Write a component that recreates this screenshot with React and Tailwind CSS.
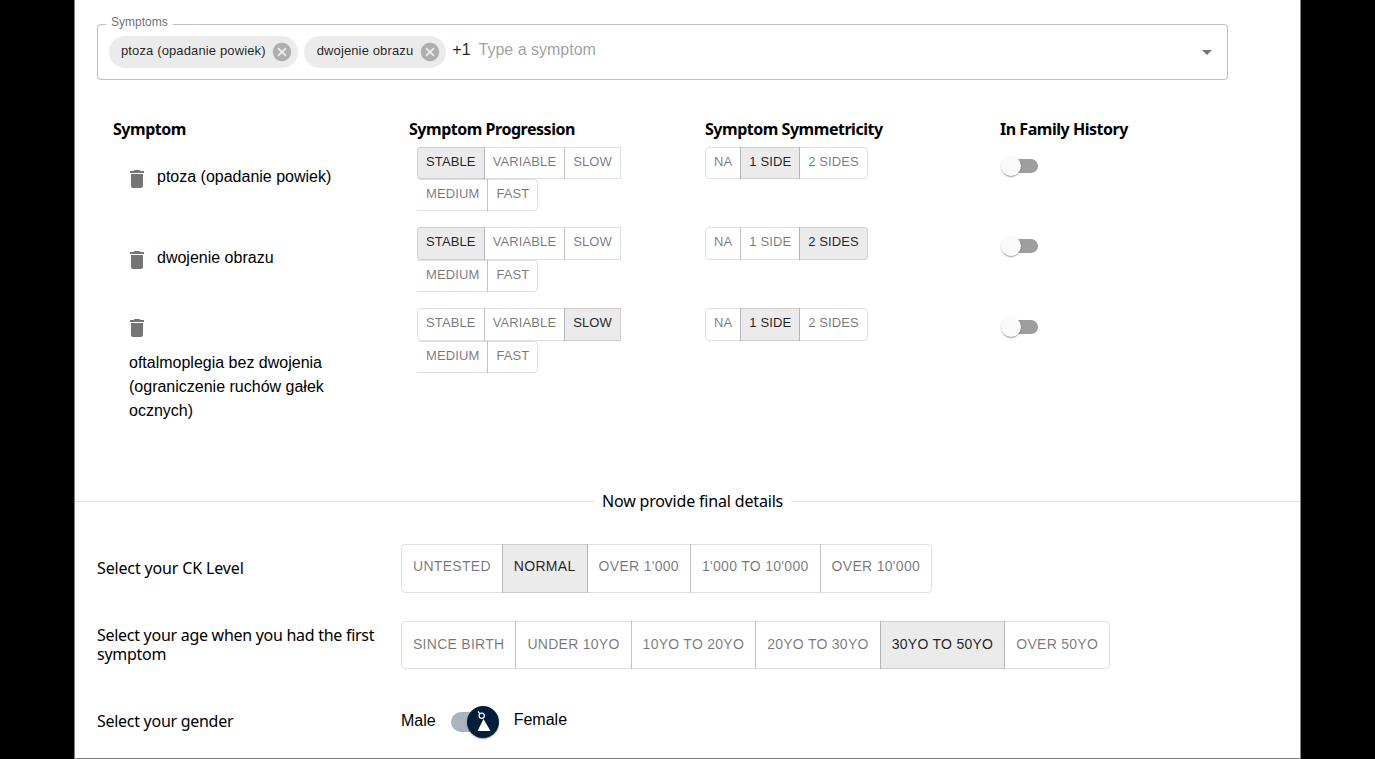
import React from "react";

const UB = "font-['Noto_Sans',sans-serif]";
const AR = "font-['Liberation_Sans',sans-serif]";

function Btn({ label, sel, cls = "" }) {
  return (
    <div className={`flex items-center justify-center border border-black/12 -ml-px first:ml-0 uppercase ${AR} ${sel ? "bg-black/8 text-black/87" : "text-black/54"} ${cls}`}>
      {label}
    </div>
  );
}

function SmallBtn({ short, cls = "", ...props }) {
  return <Btn {...props} cls={`${short ? "h-8" : "h-[32.5px]"} px-2 pb-[3px] text-[13px] tracking-[0.12px] ${cls}`} />;
}

function Progression({ sel, short }) {
  return (
    <div className="ml-2 flex flex-col items-start">
      <div className="flex">
        <SmallBtn short={short} label="Stable" sel={sel === 0} cls="rounded-l" />
        <SmallBtn short={short} label="Variable" sel={sel === 1} />
        <SmallBtn short={short} label="Slow" sel={sel === 2} />
      </div>
      <div className="flex">
        <SmallBtn short={short} label="Medium" cls="border-l-transparent" />
        <SmallBtn short={short} label="Fast" cls="rounded-r" />
      </div>
    </div>
  );
}

function Symmetry({ sel, short }) {
  return (
    <div className="flex">
      <SmallBtn short={short} label="NA" cls="rounded-l" />
      <SmallBtn short={short} label="1 side" sel={sel === 1} />
      <SmallBtn short={short} label="2 sides" sel={sel === 2} cls="rounded-r" />
    </div>
  );
}

function Trash({ cls = "" }) {
  return (
    <svg viewBox="0 0 24 24" className={`w-6 h-6 fill-black/54 shrink-0 -ml-1 ${cls}`}>
      <path d="M6 19c0 1.1.9 2 2 2h8c1.1 0 2-.9 2-2V7H6v12zM19 4h-3.5l-1-1h-5l-1 1H5v2h14V4z" />
    </svg>
  );
}

function Toggle() {
  return (
    <div className="relative w-[37px] h-5 mt-[9px] flex items-center">
      <div className="ml-[3px] w-[34px] h-[14px] rounded-full bg-[#9e9e9e]" />
      <div className="absolute left-0 top-0 w-5 h-5 rounded-full bg-[#fafafa] shadow-[0_2px_1px_-1px_rgba(0,0,0,0.2),0_1px_1px_0_rgba(0,0,0,0.14),0_1px_3px_0_rgba(0,0,0,0.12)]" />
    </div>
  );
}

function Row({ name, prog, sym, wrap, short, cls }) {
  return (
    <div className={`grid grid-cols-[296px_296px_296px_296px] ${cls}`}>
      <div className={`pl-4 ${AR} text-[16px] leading-6 text-black`}>
        {wrap ? (
          <div className="pt-2">
            <Trash />
            <div className="mt-[11px] w-[220px]">{name}</div>
          </div>
        ) : (
          <div className="pt-[18px] flex items-start gap-2">
            <Trash cls={short ? "mt-[2px]" : "mt-[3px]"} />
            <span className={short ? "" : "pt-[1px]"}>{name}</span>
          </div>
        )}
      </div>
      <Progression sel={prog} short={short} />
      <Symmetry sel={sym} short={short} />
      <Toggle />
    </div>
  );
}

function Chip({ label, cls = "pl-3" }) {
  return (
    <div className={`h-8 flex items-center rounded-full bg-black/8 pr-[5px] text-[13px] tracking-[0.13px] text-black/87 ${AR} ${cls}`}>
      <span className="pb-[2px]">{label}</span>
      <svg viewBox="0 0 24 24" className="w-[22px] h-[22px] fill-black/26 ml-[5px]">
        <path d="M12 2C6.47 2 2 6.47 2 12s4.47 10 10 10 10-4.47 10-10S17.53 2 12 2zm5 13.59L15.59 17 12 13.41 8.41 17 7 15.59 10.59 12 7 8.41 8.41 7 12 10.59 15.59 7 17 8.41 13.41 12 17 15.59z" />
      </svg>
    </div>
  );
}

function BigGroup({ items, sel, cls }) {
  return (
    <div className="flex">
      {items.map((t, i) => (
        <Btn key={t} label={t} sel={i === sel} cls={`h-[48.5px] px-[11px] text-[14px] ${cls} ${i === 0 ? "rounded-l" : ""} ${i === items.length - 1 ? "rounded-r" : ""}`} />
      ))}
    </div>
  );
}

export default function App() {
  return (
    <div className="h-[759px] overflow-hidden bg-black flex justify-center">
      <div className="w-[1227px] h-[759px] bg-white border-x border-b border-[#808080] pt-6 text-black">
        <div className="relative mx-[22px] w-[1131px] h-14 rounded border border-black/26 flex items-center pl-[11px] pr-[15px]">
          <div className={`absolute left-[8px] -top-[11px] bg-white px-[5px] text-[12px] leading-4 text-black/60 ${AR}`}>Symptoms</div>
          <div className="flex items-center gap-[6px]">
            <Chip label="ptoza (opadanie powiek)" />
            <Chip label="dwojenie obrazu" cls="pl-[13px] [&>svg]:ml-[6px]" />
          </div>
          <span className={`ml-[6px] pb-[4px] text-[16px] text-black/87 ${AR}`}>+1</span>
          <span className={`ml-[8px] pb-[4px] text-[16px] text-black/40 ${AR}`}>Type a symptom</span>
          <svg viewBox="0 0 24 24" className="w-6 h-6 fill-black/54 ml-auto -mr-[7px] -mt-[1px]">
            <path d="M7 10l5 5 5-5z" />
          </svg>
        </div>

        <div className={`mx-[38px] mt-[38px] grid grid-cols-[296px_296px_296px_296px] text-[16px] font-bold leading-[22px] h-[29px] tracking-[-0.47px] ${UB}`}>
          <div>Symptom</div>
          <div>Symptom Progression</div>
          <div>Symptom Symmetricity</div>
          <div className="-ml-px">In Family History</div>
        </div>

        <div className="ml-[38px]">
          <Row name="ptoza (opadanie powiek)" prog={0} sym={1} short cls="h-[80px]" />
          <Row name="dwojenie obrazu" prog={0} sym={2} cls="h-[81px]" />
          <Row name="oftalmoplegia bez dwojenia (ograniczenie ruchów gałek ocznych)" prog={2} sym={1} wrap />
        </div>

        <div className="mt-[68px] flex items-center gap-2">
          <div className="w-[519px] h-px bg-black/12" />
          <div className={`text-[16px] leading-5 tracking-[-0.17px] ${UB}`}>Now provide final details</div>
          <div className="flex-1 h-px bg-black/12" />
        </div>

        <div className="px-[22px] mt-[33px]">
          <div className="flex items-center">
            <div className={`w-[304px] text-[16px] leading-[19px] tracking-[-0.15px] ${UB}`}>Select your CK Level</div>
            <BigGroup cls="pb-[4px] tracking-[0.3px]" items={["Untested", "Normal", "Over 1'000", "1'000 to 10'000", "Over 10'000"]} sel={1} />
          </div>
          <div className="flex items-center mt-[28px]">
            <div className={`w-[304px] pr-5 text-[16px] leading-[19px] tracking-[-0.28px] ${UB}`}>Select your age when you had the first symptom</div>
            <BigGroup cls="tracking-[0.27px]" items={["Since birth", "Under 10yo", "10yo to 20yo", "20yo to 30yo", "30yo to 50yo", "Over 50yo"]} sel={4} />
          </div>
          <div className="flex items-center mt-[37px] h-8">
            <div className={`w-[304px] pb-[2px] text-[16px] leading-[19px] tracking-[-0.28px] ${UB}`}>Select your gender</div>
            <span className={`${AR} text-[16px] pb-[3px]`}>Male</span>
            <div className="relative ml-[15px] w-[48px] h-8 flex items-center">
              <div className="w-[40px] h-5 rounded-full bg-[#aab4be]" />
              <div className="absolute left-4 top-0 w-8 h-8 rounded-full bg-[#001e3c] shadow-[0_2px_1px_-1px_rgba(0,0,0,0.2),0_1px_1px_0_rgba(0,0,0,0.14),0_1px_3px_0_rgba(0,0,0,0.12)]">
                <svg viewBox="0 0 32 32" className="w-8 h-8" fill="#fff">
                  <circle cx="14.7" cy="9.7" r="2.6" fill="none" stroke="#fff" strokeWidth="1.2" />
                  <path d="M11 5.5l1.8 2.1" stroke="#fff" strokeWidth="1.2" />
                  <path d="M16.5 13L23.5 25H10.5z" />
                </svg>
              </div>
            </div>
            <span className={`ml-[15px] ${AR} text-[16px] pb-[4px]`}>Female</span>
          </div>
        </div>
      </div>
    </div>
  );
}
